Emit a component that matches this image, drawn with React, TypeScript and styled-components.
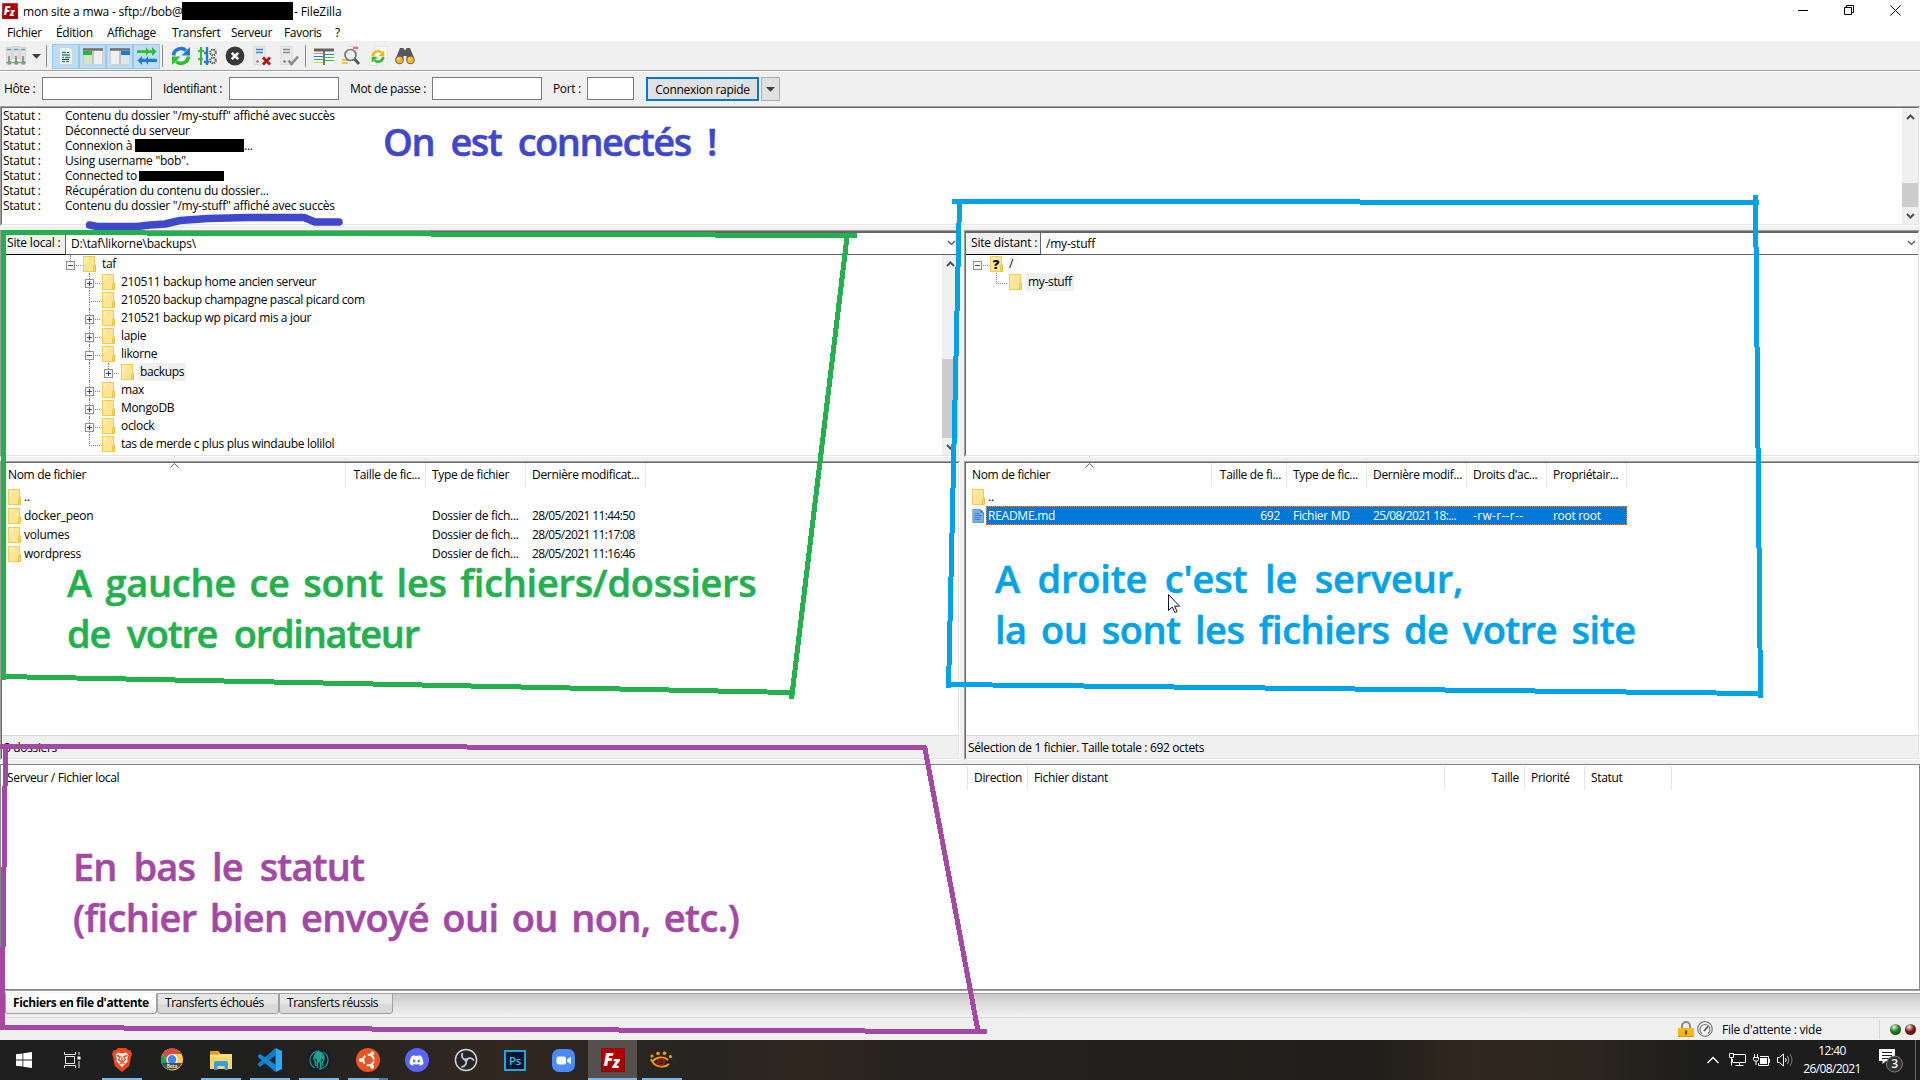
import React from 'react';
import styled, { createGlobalStyle, css } from 'styled-components';
import { FaDiscord } from 'react-icons/fa';

const Global = createGlobalStyle`
  * { box-sizing: border-box; }
  html, body { margin: 0; padding: 0; overflow: hidden; }
  body { font: 12px/15px "Open Sans", "Noto Sans", sans-serif; letter-spacing: -0.25px; color: #000; }
`;

const Desktop = styled.div`
  position: relative;
  width: 1920px;
  height: 1080px;
  display: flex;
  flex-direction: column;
  background: #f0f0f0;
  overflow: hidden;
  white-space: nowrap;
`;

/* ---------- title bar and menu ---------- */
const TitleBar = styled.header`
  height: 24px;
  padding: 0 7px 2px 2px;
  display: flex;
  align-items: center;
  background: #fff;
`;
const Title = styled.span`
  margin-left: 5px;
  width: 159px;
  letter-spacing: -0.18px;
`;
const Redacted = styled.span<{ $w: number; $h: number }>`
  display: inline-block;
  flex: none;
  width: ${p => p.$w}px;
  height: ${p => p.$h}px;
  background: #000;
`;
const TitleEnd = styled.span`
  margin-left: 1px;
  flex: 1;
  letter-spacing: -0.1px;
`;
const WindowButtons = styled.div`
  display: flex;
  gap: 35px;
  padding-right: 12px;
  margin-top: -2px;
`;
const MenuBar = styled.nav`
  height: 17px;
  padding-left: 7px;
  display: flex;
  align-items: center;
  background: #fff;
  letter-spacing: -0.32px;
`;
const MenuItem = styled.span<{ $w: number }>`
  width: ${p => p.$w}px;
`;

/* ---------- toolbar ---------- */
const Toolbar = styled.div`
  height: 31px;
  display: flex;
  align-items: center;
  padding-left: 2px;
  border-bottom: 1px solid #fff;
  box-shadow: inset 0 -1px 0 #a0a0a0;
`;
const ToolButton = styled.span<{ $on?: boolean; $w?: number }>`
  width: ${p => p.$w ?? 27}px;
  height: 25px;
  display: flex;
  align-items: center;
  justify-content: center;
  ${p => p.$on && css`
    background: #c0dcf3;
    border: 1px solid #90c8f6;
  `}
`;
const ToolSeparator = styled.span<{ $l: number; $r: number }>`
  width: 1px;
  height: 22px;
  background: #8d8d8d;
  margin: 0 ${p => p.$r}px 0 ${p => p.$l}px;
`;

/* ---------- quick connect ---------- */
const QuickBar = styled.div`
  height: 34px;
  padding: 5px 0 0 4px;
  display: flex;
  align-items: flex-start;
`;
const QuickLabel = styled.span<{ $w: number }>`
  width: ${p => p.$w}px;
  line-height: 23px;
  letter-spacing: -0.36px;
`;
const QuickInput = styled.span<{ $w: number; $gap: number }>`
  width: ${p => p.$w}px;
  height: 23px;
  margin-right: ${p => p.$gap}px;
  background: #fff;
  border: 1px solid #7a7a7a;
`;
const QuickButton = styled.span`
  width: 113px;
  height: 24px;
  border: 2px solid #0078d7;
  background: #e1e1e1;
  display: flex;
  align-items: center;
  justify-content: center;
  letter-spacing: -0.31px;
`;
const DropButton = styled.span`
  width: 19px;
  height: 24px;
  margin-left: 2px;
  border: 1px solid #adadad;
  background: #e1e1e1;
  display: flex;
  align-items: center;
  justify-content: center;
`;

/* ---------- sunken panels ---------- */
const Sunken = styled.section<{ $h: number }>`
  height: ${p => p.$h}px;
  border: 1px solid;
  border-color: #a0a0a0 #fff #fff #a0a0a0;
  display: flex;
`;
const Inner = styled.div<{ $row?: boolean }>`
  flex: 1;
  min-width: 0;
  background: #fff;
  border: 1px solid;
  border-color: #696969 #e3e3e3 #e3e3e3 #696969;
  display: flex;
  flex-direction: ${p => (p.$row ? 'row' : 'column')};
`;
const LogLines = styled.div`
  flex: 1;
`;
const LogLine = styled.div`
  height: 15px;
  padding-left: 1px;
  display: flex;
  align-items: center;
`;
const LogKind = styled.span`
  width: 62px;
`;
const LogText = styled.span<{ $w?: number }>`
  width: ${p => (p.$w ? p.$w + 'px' : 'auto')};
`;

const ScrollTrack = styled.div<{ $w: number }>`
  width: ${p => p.$w}px;
  background: #f0f0f0;
  display: flex;
  flex-direction: column;
  align-items: stretch;
`;
const ScrollArrow = styled.span`
  height: 17px;
  display: flex;
  align-items: center;
  justify-content: center;
`;
const ScrollSpace = styled.span`
  flex: 1;
`;
const ScrollThumb = styled.span<{ $h: number }>`
  height: ${p => p.$h}px;
  background: #cdcdcd;
`;

const Panes = styled.main`
  margin-top: 4px;
  display: grid;
  grid-template-columns: 960px 956px;
  column-gap: 4px;
`;
const Pane = styled.div`
  display: flex;
  flex-direction: column;
  gap: 4px;
`;
const AddressBar = styled.div`
  height: 23px;
  display: flex;
  border-top: 1px solid #646464;
  border-bottom: 1px solid #646464;
`;
const AddressLabel = styled.span<{ $w: number; $pad: number }>`
  width: ${p => p.$w}px;
  height: 22px;
  padding: 0 0 2px ${p => p.$pad}px;
  background: #f0f0f0;
  border-right: 1px solid #646464;
  border-bottom: 1px solid #000;
  display: flex;
  align-items: center;
  letter-spacing: -0.18px;
`;
const AddressPath = styled.span`
  flex: 1;
  padding: 0 2px 1px 5px;
  display: flex;
  align-items: center;
  justify-content: space-between;
  letter-spacing: -0.2px;
`;
const TreeArea = styled.div`
  flex: 1;
  display: flex;
`;
const TreeRows = styled.div`
  flex: 1;
`;
const TreeRow = styled.div<{ $x: number }>`
  height: 18px;
  padding-left: ${p => p.$x}px;
  display: flex;
  align-items: stretch;
`;
const Rail = styled.span<{ $line?: boolean }>`
  width: 15px;
  margin-left: 4px;
  border-left: 1px dotted ${p => (p.$line ? '#808080' : 'transparent')};
`;
const Stem = styled.span`
  width: 9px;
  display: flex;
  flex-direction: column;
`;
const StemLine = styled.span<{ $h: number; $show: boolean }>`
  height: ${p => p.$h}px;
  margin-left: 4px;
  border-left: 1px dotted ${p => (p.$show ? '#808080' : 'transparent')};
`;
const Expander = styled.svg`
  width: 9px;
  height: 9px;
  display: block;
`;
const Branch = styled.span<{ $long?: boolean }>`
  width: ${p => (p.$long ? 11 : 5)}px;
  margin: 10px 2px 0 ${p => (p.$long ? -5 : 1)}px;
  border-top: 1px dotted #808080;
`;
const IconSlot = styled.span`
  width: 13px;
  padding-top: 1px;
  margin-left: auto;
`;
const StemGroup = styled.span`
  width: 30px;
  display: flex;
`;
const TreeLabel = styled.span<{ $on?: boolean }>`
  margin-left: 4px;
  padding: 0 2px;
  line-height: 18px;
  letter-spacing: -0.33px;
  background: ${p => (p.$on ? '#f0f0f0' : 'transparent')};
`;

/* ---------- file tables ---------- */
const TableRow = styled.div<{ $cols: string; $selected?: boolean }>`
  position: relative;
  height: 19px;
  display: grid;
  grid-template-columns: ${p => p.$cols};
  align-items: center;
  ${p => p.$selected && css`
    width: 661px;
    color: #fff;
    &::before {
      content: '';
      position: absolute;
      inset: 0 0 0 20px;
      background: #0078d7;
      border: 1px dotted #ff8728;
    }
  `}
`;
const HeadRow = styled.div<{ $cols: string; $top?: number }>`
  height: 24px;
  margin-top: ${p => p.$top ?? 0}px;
  display: grid;
  grid-template-columns: ${p => p.$cols};
`;
const HeadCell = styled.span<{ $right?: boolean }>`
  position: relative;
  padding: 0 5px 1px 6px;
  border-right: 1px solid #e5e5e5;
  display: flex;
  align-items: center;
  justify-content: ${p => (p.$right ? 'flex-end' : 'flex-start')};
  letter-spacing: -0.32px;
`;
const SortMark = styled.svg`
  position: absolute;
  top: 0;
  left: calc(50% - 4px);
`;
const Cell = styled.span<{ $right?: boolean; $date?: boolean; $wide?: boolean }>`
  position: relative;
  padding: 0 ${p => (p.$right ? 7 : 6)}px 0 6px;
  text-align: ${p => (p.$right ? 'right' : 'left')};
  letter-spacing: ${p => (p.$date ? -0.6 : p.$wide ? 0.32 : -0.3)}px;
`;
const NameCell = styled.span`
  position: relative;
  padding-left: 6px;
  display: flex;
  align-items: center;
  gap: 3px;
`;
const Filler = styled.div`
  flex: 1;
`;
const PaneStatus = styled.div`
  height: 23px;
  padding: 4px 0 0 2px;
  background: #f0f0f0;
  border-top: 1px solid #d7d7d7;
  letter-spacing: -0.35px;
`;

/* ---------- queue ---------- */
const Queue = styled.section`
  height: 226px;
  margin-top: 4px;
  background: #fff;
  border: 1px solid #828790;
`;
const TabStrip = styled.div`
  height: 28px;
  border-top: 1px solid #a0a0a0;
  border-bottom: 1px solid #d7d7d7;
  padding: 0 0 0 5px;
  display: flex;
  background: linear-gradient(#f8f8f8 0 2px, #a0a0a0 2px 3px, #cacaca 3px, #f3f3f3 100%);
`;
const Tab = styled.span<{ $w: number; $active?: boolean }>`
  width: ${p => p.$w}px;
  height: 21px;
  margin-top: 2px;
  padding-left: 7px;
  line-height: 17px;
  border: 1px solid #a0a0a0;
  border-top-color: ${p => (p.$active ? '#fff' : '#a0a0a0')};
  border-radius: 0 0 3px 3px;
  font-weight: ${p => (p.$active ? 700 : 400)};
  letter-spacing: ${p => (p.$active ? -0.38 : -0.45)}px;
  background: ${p => (p.$active ? 'linear-gradient(#fff 50%, #e8e8e8)' : 'linear-gradient(#e6e6e6 50%, #d9d9d9 50%)')};
`;
const StatusBar = styled.footer`
  height: 22px;
  padding: 0 4px 0 0;
  display: flex;
  align-items: center;
  justify-content: flex-end;
`;
const GaugeGap = styled.span`
  display: flex;
  margin-left: 3px;
`;
const QueueState = styled.span`
  width: 158px;
  margin-left: 9px;
  line-height: 19px;
  border-right: 1px solid #d7d7d7;
  letter-spacing: -0.25px;
`;
const Leds = styled.span`
  display: flex;
  gap: 4px;
  margin-left: 10px;
`;
const Led = styled.i<{ $c: string }>`
  width: 11px;
  height: 11px;
  border-radius: 50%;
  background: radial-gradient(circle at 38% 28%, #e8f0e8 0, ${p => p.$c} 45%, #1a1a1a 130%);
`;

/* ---------- taskbar ---------- */
const Taskbar = styled.div`
  height: 40px;
  display: flex;
  background: linear-gradient(90deg, #1e1e1e 0, #20201f 270px, #2c2520 420px, #33281f 500px, #2a2622 600px, #272521 720px, #31261f 800px, #262320 900px, #231f1c 1100px, #211f1b 1380px, #33281f 1470px, #2a251e 1600px, #1d1d1d 1690px);
`;
const TaskItem = styled.span<{ $w: number; $active?: boolean; $line?: number; $tail?: boolean }>`
  width: ${p => p.$w}px;
  display: flex;
  align-items: center;
  justify-content: center;
  background-color: ${p => (p.$active ? '#55504d' : 'transparent')};
  ${p => p.$line && css`
    background-image: linear-gradient(90deg, #76b9ed ${p.$tail ? '31px, #4f7ea3 31px' : '0'}, ${p.$tail ? '#4f7ea3' : '#76b9ed'});
    background-size: ${p.$line}px 2px;
    background-repeat: no-repeat;
    background-position: center bottom;
  `}
`;
const Tray = styled.div`
  margin-left: auto;
  display: flex;
  align-items: center;
  color: #fff;
`;
const TrayIcon = styled.span<{ $w: number }>`
  width: ${p => p.$w}px;
  display: flex;
  align-items: center;
`;
const Clock = styled.span`
  width: 58px;
  text-align: center;
  line-height: 18px;
  letter-spacing: -0.6px;
`;
const Notice = styled.span`
  margin-left: 18px;
  width: 36px;
  height: 28px;
`;
const PeekEdge = styled.span`
  height: 40px;
  width: 5px;
  border-left: 1px solid #6b6b6b;
`;
const Badge = styled.span<{ $bg: string; $s: number }>`
  width: 24px;
  height: 24px;
  border-radius: 50%;
  background: ${p => p.$bg};
  color: #fff;
  font-size: ${p => p.$s}px;
  display: flex;
  align-items: center;
  justify-content: center;
`;

/* ---------- annotations drawn over the windows ---------- */
const Strokes = styled.svg`
  position: absolute;
  inset: 0;
  pointer-events: none;
`;
const Note = styled.div<{ $x: number; $y: number; $c: string }>`
  position: absolute;
  left: ${p => p.$x}px;
  top: ${p => p.$y}px;
  color: ${p => p.$c};
  font: 600 38px/51px "Open Sans", sans-serif;
  -webkit-text-stroke: 0.5px ${p => p.$c};
`;
const NoteLine = styled.div<{ $ls: number; $ws: number }>`
  letter-spacing: ${p => p.$ls}px;
  word-spacing: ${p => p.$ws}px;
`;
const Pointer = styled.svg`
  position: absolute;
  left: 1168px;
  top: 594px;
`;

/* ---------- drawings ---------- */
const Folder = ({ unknown }: { unknown?: boolean }) => (
  <svg width="13" height="16" viewBox="0 0 13 16" display="block">
    <rect x="0.5" y="0.5" width="11" height="15" fill="#ffe594" stroke="#f0cb55" />
    <path d="M1 1h5l-5 9z" fill="#ffeeb0" />
    <path d="M10.500 15.500v-5l.8-1.500h1.200v6.500z" fill="#ffe08a" stroke="#e8bd3e" />
    {unknown && <text x="6" y="13" textAnchor="middle" fontFamily="Open Sans" fontWeight="800" fontSize="13" fill="#000">?</text>}
  </svg>
);
const PageIcon = () => (
  <svg width="13" height="14" viewBox="0 0 13 14" display="block">
    <path d="M.5.500h8l3 3v10h-11z" fill="#74b1e6" stroke="#5b9bd5" />
    <path d="M.5 0v14" stroke="#b0b8c0" />
    <path d="M2.500 4.500h5M2.500 6.500h7M2.500 8.500h6M2.500 10.500h6" stroke="#3f83c5" />
    <path d="M8.500.500v3h3z" fill="#2f78bd" />
  </svg>
);
const FzLogo = ({ s }: { s: number }) => (
  <svg width={s} height={s} viewBox="0 0 24 24" overflow="visible">
    <rect x="0.5" y="0.5" width="23" height="23" fill="#b40000" stroke="#8c0000" strokeDasharray="1.500 1.200" />
    <path d="M0 14l24-5v15H0z" fill="#960000" opacity=".6" />
    <text x="2.500" y="17.500" fontFamily="Open Sans" fontWeight="800" fontStyle="italic" fontSize="17" fill="#fff">F</text>
    <text x="11.500" y="20" fontFamily="Open Sans" fontWeight="800" fontStyle="italic" fontSize="15" fill="#fff">z</text>
  </svg>
);
const Chevron = ({ up, bold }: { up?: boolean; bold?: boolean }) => (
  <svg width="9" height="6" viewBox="0 0 9 6" fill="none" stroke="#505050" strokeWidth={bold ? 2 : 1.2}>
    <path d={up ? 'M1 5l3.500-3.500L8 5' : 'M1 1l3.500 3.500L8 1'} />
  </svg>
);
const Caret = () => <svg width="9" height="5"><path d="M0 0h9L4.500 4.800z" fill="#404040" /></svg>;

const ServersIcon = () => (
  <svg width="20" height="20" viewBox="0 0 20 20">
    {[0, 7, 14].map((x, i) => (
      <g key={x}>
        <rect x={x} y={i === 1 ? 0.5 : 1.5} width="6" height="12" fill="#e2e2e2" stroke="#c4c4c4" strokeWidth=".7" />
        <path d={`M${x + 1} 3.500h4`} stroke="#4f97d8" strokeWidth="1.400" />
        <path d={`M${x + 3} 10v6`} stroke="#777" strokeWidth="1.400" />
        <rect x={x + 1.5} y="15" width="3.500" height="3.500" fill="#7d8a7d" />
      </g>
    ))}
    <path d="M0 16.500h20" stroke="#7fa67f" strokeWidth="1.400" />
  </svg>
);
const LogIcon = () => (
  <svg width="16" height="18" viewBox="0 0 16 18">
    <path d="M1.500.500h10l3 3v14h-13z" fill="#f3f3f3" stroke="#cfd4d8" />
    <path d="M4 5.500h4M7 10.500h5M4 14.500h3" stroke="#2a7fd0" strokeWidth="1.300" />
    <path d="M4 8h8M4 10.500h2M8 14.500h3" stroke="#3a9b3a" strokeWidth="1.300" />
    <path d="M9 5.500h2M4 12.500h7" stroke="#444" strokeWidth="1.100" />
  </svg>
);
const PaneIcon = ({ right }: { right?: boolean }) => (
  <svg width="20" height="17" viewBox="0 0 20 17">
    <rect x=".5" y=".5" width="19" height="16" fill="#efefef" stroke="#d0d0d0" />
    <path d="M0 1.500h20" stroke="#6e6e6e" strokeWidth="2.500" />
    {right ? <rect x="11" y="3" width="9" height="4" fill="#1f7bd6" /> : <rect x="0" y="3" width="9" height="4" fill="#21c02b" />}
    {right ? <rect x="11" y="7" width="8" height="9" fill="#dfe8f2" /> : <rect x="1" y="7" width="8" height="9" fill="#cfe6cb" />}
    <path d="M10 3v13" stroke="#9a9a9a" />
  </svg>
);
const QueueIcon = () => (
  <svg width="20" height="18" viewBox="0 0 20 18">
    <path d="M0 3.200h9V0l3.500 4.500L9 9V6H0zM11 3.200h4V0l4.500 4.500L15 9V6h-4z" fill="#2ac02f" />
    <path d="M20 11.800h-9V9l-3.500 4.500L11 18v-3h9zM8 11.800H5V9L.5 13.500 5 18v-3h3z" fill="#1f7bd6" />
  </svg>
);
const RefreshIcon = ({ s }: { s: number }) => (
  <svg width={s} height={s} viewBox="0 0 20 20" fill="none">
    <path d="M2.500 9.500A7.500 7.500 0 0 1 15 4.500" stroke={s > 16 ? '#1f7bd6' : '#f5b400'} strokeWidth="3.600" />
    <path d="M19 1v8.500h-8.500z" fill={s > 16 ? '#1f7bd6' : '#f5b400'} />
    <path d="M17.500 10.500A7.500 7.500 0 0 1 5 15.500" stroke="#2ac02f" strokeWidth="3.600" />
    <path d="M1 19v-8.500h8.500z" fill="#2ac02f" />
  </svg>
);
const ProcessIcon = () => (
  <svg width="20" height="20" viewBox="0 0 20 20" fill="none">
    <path d="M3 1v18M0 5h6M0 13h5" stroke="#2ac02f" strokeWidth="2" />
    <path d="M9 1v18M6 7h4M6 16h5" stroke="#1f7bd6" strokeWidth="2.400" />
    <circle cx="15" cy="6.500" r="2.800" stroke="#555" strokeWidth="2" strokeDasharray="1.400 .8" />
    <circle cx="15" cy="14.500" r="2.800" stroke="#555" strokeWidth="2" strokeDasharray="1.400 .8" />
  </svg>
);
const CancelIcon = () => (
  <svg width="20" height="20" viewBox="0 0 20 20">
    <circle cx="10" cy="10" r="9.400" fill="#383838" />
    <path d="M6.800 6.800l6.400 6.400M13.200 6.800l-6.400 6.400" stroke="#fff" strokeWidth="2.600" />
  </svg>
);
const ServerMark = ({ ok }: { ok?: boolean }) => (
  <svg width="20" height="20" viewBox="0 0 20 20" fill="none">
    <rect x="2" y="0.500" width="11" height="18" fill="#e9e9e9" stroke="#dadada" />
    <path d="M4 3.500h7M4 6.500h7" stroke={ok ? '#8a8a8a' : '#3c88d4'} strokeWidth="1.600" />
    <circle cx="5.500" cy="15.500" r="1.300" fill="#7d7d7d" />
    {ok
      ? <path d="M9.500 14.500l3 3.500 6.500-7.500" stroke="#8a8a8a" strokeWidth="2.600" />
      : <path d="M11 11.500l7 7M18 11.500l-7 7" stroke="#b51218" strokeWidth="2.800" />}
  </svg>
);
const CompareIcon = () => (
  <svg width="20" height="17" viewBox="0 0 20 17">
    <rect width="20" height="16" y=".5" fill="#fafafa" />
    <path d="M0 2h20" stroke="#636363" strokeWidth="3" />
    <path d="M0 5.500h9" stroke="#e08080" /><path d="M11 6.500h9M0 8.500h9" stroke="#1f7bd6" />
    <path d="M11 9.500h9" stroke="#2ac02f" /><path d="M0 11.500h9M11 12.500h9" stroke="#2ac02f" />
    <path d="M0 14.500h9" stroke="#f2c230" />
    <path d="M10 3v14" stroke="#4a4a4a" strokeWidth="1.500" />
  </svg>
);
const FindIcon = () => (
  <svg width="20" height="20" viewBox="0 0 20 20" fill="none">
    <path d="M8 .5h8v5" fill="#fafafa" stroke="#d5d5d5" />
    <path d="M12 2h5" stroke="#e04040" strokeWidth="1.500" />
    <path d="M1 14h6M1 17h6" stroke="#f2b705" strokeWidth="1.500" />
    <circle cx="9.500" cy="9" r="5.500" fill="#e9edf0" stroke="#777" strokeWidth="1.700" />
    <path d="M13.500 13l4.500 5" stroke="#555" strokeWidth="2.800" />
  </svg>
);
const SyncIcon = () => (
  <svg width="20" height="20" viewBox="0 0 20 20">
    <path d="M7 .5h12v12H7z" fill="#fbfbfb" stroke="#e2e2e2" />
    <path d="M1.500 12.500h7v7h-7z" fill="#f6f6f6" stroke="#e0e0e0" />
    <g transform="translate(3 3.500)"><RefreshIcon s={14} /></g>
  </svg>
);
const BinocularsIcon = () => (
  <svg width="20" height="18" viewBox="0 0 20 18">
    <path d="M5 1h3.500l1 2h1l1-2H15l4.500 11-8 1V9h-3v4l-8-1z" fill="#585858" />
    <circle cx="4.500" cy="13" r="4.300" fill="#666" /><circle cx="15.500" cy="13" r="4.300" fill="#666" />
    <circle cx="4.500" cy="13" r="3.200" fill="#ffb81c" /><circle cx="15.500" cy="13" r="3.200" fill="#ffb81c" />
    <circle cx="3.700" cy="12" r="1.100" fill="#ffe49a" /><circle cx="14.700" cy="12" r="1.100" fill="#ffe49a" />
  </svg>
);
const LockIcon = () => (
  <svg width="16" height="16" viewBox="0 0 16 16">
    <path d="M4 8V5a4 4 0 0 1 8 0v3" fill="none" stroke="#8b8b8b" strokeWidth="2" />
    <rect y="7" width="16" height="9" fill="#f7b816" /><path d="M0 15.500h16" stroke="#d49a08" />
    <path d="M8 9.500v4" stroke="#5a4a20" strokeWidth="2.200" />
  </svg>
);
const GaugeIcon = () => (
  <svg width="16" height="16" viewBox="0 0 16 16" fill="none">
    <circle cx="8" cy="8" r="7.300" fill="#f4f4f4" stroke="#7a7a7a" strokeWidth="1.200" />
    <path d="M5 12.500A5 5 0 1 1 11 12.500" stroke="#777" strokeWidth="1.200" />
    <path d="M7 10l4-4.500" stroke="#555" strokeWidth="1.800" />
  </svg>
);

const WinIcon = () => <svg width="16" height="16" viewBox="0 0 16 16"><path d="M0 2.300l6.500-.9v6.200H0zM7.300 1.200L16 0v7.600H7.300zM0 8.400h6.500v6.200L0 13.700zM7.300 8.400H16V16l-8.700-1.200z" fill="#fff" /></svg>;
const TaskViewIcon = () => (
  <svg width="17" height="16" viewBox="0 0 17 16" fill="none" stroke="#e8e8e8">
    <path d="M1.500 4.500h9v7h-9zM.5 0v2.500h11V0M.5 16v-2.500h11V16M15 0v3M15 9v7" /><path d="M13.500 4.500h3v3h-3z" fill="#fff" stroke="none" />
  </svg>
);
const BraveIcon = () => (
  <svg width="20" height="24" viewBox="0 0 20 24">
    <path d="M6 0h8l2 2 2.500.200L20 6l-1 3-1.800 9L10 24l-7.200-6L1 9 0 6l1.500-3.800L4 2z" fill="#f4461a" />
    <path d="M3.500 7l2.500-2.500 4 1 4-1L16.500 7l-1.300 4 .3 2.500-2.500 2.500-3 3-3-3-2.500-2.500.3-2.500z" fill="#fff" />
    <path d="M4.500 7.500l3.700 1-1.500 3 2 2 1.300-.7 1.300.7 2-2-1.500-3 3.700-1M10 9v4M7.500 16l2.500-1.500 2.500 1.500" fill="none" stroke="#f4461a" strokeWidth="1.300" />
  </svg>
);
const ChromeIcon = () => (
  <svg width="22" height="24" viewBox="0 0 22 24">
    <circle cx="11" cy="11.500" r="11" fill="#ffce44" />
    <path d="M1.500 6A11 11 0 0 1 20.600 6H11L7 14z" fill="#dc4b3e" />
    <path d="M1.500 6A11 11 0 0 0 8 22.100L12 16 6.500 14z" fill="#18a15d" />
    <circle cx="11" cy="11.500" r="5.600" fill="#fff" /><circle cx="11" cy="11.500" r="4.400" fill="#4285f4" />
    <path d="M1 15h20a11 11 0 0 1-20 0z" fill="#4b4b4b" />
    <text x="11" y="20" textAnchor="middle" fontFamily="Open Sans" fontWeight="700" fontSize="5" fill="#ddd">Beta</text>
  </svg>
);
const ExplorerIcon = () => (
  <svg width="22" height="19" viewBox="0 0 22 19">
    <path d="M0 1h9l1.500 2H22v15H0z" fill="#ffd75e" /><path d="M0 0h9v3.500H0z" fill="#e0a010" /><path d="M0 4h22v2H0z" fill="#ffe18a" />
    <path d="M4 19v-7q0-2 2-2h10q2 0 2 2v7h-3.500v-4h-7v4z" fill="#3a9be8" />
  </svg>
);
const CodeIcon = () => (
  <svg width="24" height="24" viewBox="0 0 24 24">
    <path d="M17.500 0v7.500L2 19 0 17v-1.500z" fill="#0c7dc5" />
    <path d="M17.500 24v-7.500L2 6 0 7.500V9z" fill="#1487d4" />
    <path d="M17.500 0L24 3v18l-6.500 3z" fill="#2aa7f5" />
  </svg>
);
const KrakenIcon = () => (
  <svg width="24" height="24" viewBox="0 0 24 24" fill="none">
    <circle cx="12" cy="12" r="12" fill="#15202b" />
    <circle cx="12" cy="12" r="9" stroke="#1f8f80" strokeWidth="1.300" strokeDasharray="24 4.500" strokeDashoffset="10" />
    <path d="M12 4c-3 0-5 3.500-5 6.500 0 2 1 2 1.500 3V18M12 4c3 0 5 3.500 5 6.500 0 2-1 2-1.500 3V18M10.500 14v6M13.500 14v6" stroke="#22a392" strokeWidth="1.500" />
    <ellipse cx="12" cy="9.500" rx="4" ry="5" fill="#22a392" />
    <circle cx="9" cy="12" r="1" fill="#15202b" /><circle cx="15" cy="12" r="1" fill="#15202b" />
  </svg>
);
const UbuntuMark = () => (
  <svg width="24" height="24" viewBox="0 0 24 24" fill="none">
    <circle cx="12" cy="12" r="12" fill="#e95420" />
    <circle cx="12.500" cy="12" r="5.300" stroke="#fff" strokeWidth="2" strokeDasharray="8.600 2.500" strokeDashoffset="-1.300" />
    <circle cx="4.800" cy="12" r="1.900" fill="#fff" /><circle cx="16.300" cy="5.300" r="1.900" fill="#fff" /><circle cx="16.300" cy="18.700" r="1.900" fill="#fff" />
  </svg>
);
const ObsIcon = () => (
  <svg width="24" height="24" viewBox="0 0 24 24" fill="none">
    <circle cx="12" cy="12" r="10.600" fill="#26252a" stroke="#d4d4d4" strokeWidth="1.500" />
    <g stroke="#c9c9c9" strokeWidth="1.800">
      <path d="M12 12C8 11 7 8 8.500 5" /><path d="M12 12c3-3 6-2 8 .5" /><path d="M12 12c1 4-1 6.500-4.500 7" />
    </g>
    <circle cx="12" cy="12" r="1.800" fill="#c9c9c9" />
  </svg>
);
const PsIcon = () => (
  <svg width="22" height="21" viewBox="0 0 22 21">
    <rect x="1" y="1" width="20" height="19" fill="#06152b" stroke="#25b4e8" strokeWidth="1.800" />
    <text x="11" y="14.800" textAnchor="middle" fontFamily="Open Sans" fontWeight="600" fontSize="11.500" fill="#2fc3f7">Ps</text>
  </svg>
);
const ZoomIcon = () => (
  <svg width="23" height="23" viewBox="0 0 23 23">
    <rect width="23" height="23" rx="7" fill="#4a8cff" /><rect x="4.500" y="7.500" width="9.500" height="8" rx="2" fill="#fff" /><path d="M15 10.500l3.800-2.700v7.400L15 12.500z" fill="#fff" />
  </svg>
);
const EyeIcon = () => (
  <svg width="23" height="18" viewBox="0 0 23 18" fill="none">
    <path d="M1 8c3 9 14 9 18 5M3 10c3-4 11-5 15-1" stroke="#f0a010" strokeWidth="1.800" />
    <circle cx="11" cy="11" r="3.200" stroke="#b81010" strokeWidth="1.600" /><circle cx="11" cy="11" r="1" fill="#b81010" />
    <circle cx="2" cy="5" r="1.600" fill="#f0a010" /><circle cx="8" cy="2.500" r="1.800" fill="#f0a010" /><circle cx="14.500" cy="2.300" r="1.800" fill="#f0a010" /><circle cx="20.500" cy="5.500" r="1.600" fill="#f0a010" />
  </svg>
);

/* ---------- data ---------- */
type Node = { name: string; depth: number; mark?: '+' | '-'; top?: boolean; last?: boolean; on?: boolean; unknown?: boolean };
const localTree: Node[] = [
  { name: 'taf', depth: 0, mark: '-', top: true, last: true },
  { name: '210511 backup home ancien serveur', depth: 1, mark: '+', top: true },
  { name: '210520 backup champagne pascal picard com', depth: 1, top: true },
  { name: '210521 backup wp picard mis a jour', depth: 1, mark: '+', top: true },
  { name: 'lapie', depth: 1, mark: '+', top: true },
  { name: 'likorne', depth: 1, mark: '-', top: true },
  { name: 'backups', depth: 2, mark: '+', top: true, last: true, on: true },
  { name: 'max', depth: 1, mark: '+', top: true },
  { name: 'MongoDB', depth: 1, mark: '+', top: true },
  { name: 'oclock', depth: 1, mark: '+', top: true },
  { name: 'tas de merde c plus plus windaube lolilol', depth: 1, top: true, last: true },
];
const remoteTree: Node[] = [
  { name: '/', depth: 0, mark: '-', last: true, unknown: true },
  { name: 'my-stuff', depth: 1, top: true, last: true, on: true },
];
const Tree = ({ nodes, x }: { nodes: Node[]; x: number }) => (
  <TreeRows>
    {nodes.map(n => (
      <TreeRow key={n.name} $x={x}>
        {n.depth > 0 && <Rail />}
        {n.depth > 1 && <Rail $line />}
        <StemGroup>
          <Stem>
            <StemLine $h={n.mark ? 6 : 11} $show={!!n.top} />
            {n.mark && (
              <Expander viewBox="0 0 9 9">
                <rect x=".5" y=".5" width="8" height="8" fill="#f8f8f8" stroke="#919191" />
                <path d={n.mark === '+' ? 'M2 4.500h5M4.500 2v5' : 'M2 4.500h5'} stroke="#2b4b9b" />
              </Expander>
            )}
            <StemLine $h={n.mark ? 3 : 7} $show={!n.last} />
          </Stem>
          <Branch $long={!n.mark} />
          <IconSlot><Folder unknown={n.unknown} /></IconSlot>
        </StemGroup>
        <TreeLabel $on={n.on}>{n.name}</TreeLabel>
      </TreeRow>
    ))}
  </TreeRows>
);

const log: [string, number?, number?, string?][] = [
  ['Contenu du dossier "/my-stuff" affiché avec succès'],
  ['Déconnecté du serveur'],
  ['Connexion à', 109, 13, '...'],
  ['Using username "bob".'],
  ['Connected to', 85, 10],
  ['Récupération du contenu du dossier...'],
  ['Contenu du dossier "/my-stuff" affiché avec succès'],
];

const LOCAL_COLS = '344px 80px 100px 120px';
const REMOTE_COLS = '246px 75px 80px 100px 80px 80px';
const QUEUE_COLS = '967px 60px 417px 80px 60px 87px';

const Head = ({ cols, labels, right, sort, top }: { cols: string; labels: string[]; right: number; sort?: boolean; top?: number }) => (
  <HeadRow $cols={cols} $top={top}>
    {labels.map((l, i) => (
      <HeadCell key={l} $right={i === right}>
        {l}
        {sort && i === 0 && <SortMark width="9" height="5" fill="none" stroke="#606060"><path d="M.5 4.500l4-4 4 4" /></SortMark>}
      </HeadCell>
    ))}
  </HeadRow>
);

export default function App() {
  return (
    <>
      <Global />
      <Desktop>
        <TitleBar>
          <FzLogo s={16} />
          <Title>mon site a mwa - sftp://bob@</Title>
          <Redacted $w={111} $h={18} />
          <TitleEnd>- FileZilla</TitleEnd>
          <WindowButtons>
            <svg width="11" height="11" stroke="#000"><path d="M0 5.500h10" /></svg>
            <svg width="11" height="11" stroke="#000" fill="none"><path d="M.5 2.500h7v7h-7zM2.500 2V.5h7v7H8" /></svg>
            <svg width="11" height="11" stroke="#000"><path d="M.5.5l10 10M10.500.5l-10 10" /></svg>
          </WindowButtons>
        </TitleBar>
        <MenuBar>
          <MenuItem $w={49}>Fichier</MenuItem>
          <MenuItem $w={51}>Édition</MenuItem>
          <MenuItem $w={65}>Affichage</MenuItem>
          <MenuItem $w={59}>Transfert</MenuItem>
          <MenuItem $w={53}>Serveur</MenuItem>
          <MenuItem $w={51}>Favoris</MenuItem>
          <MenuItem $w={20}>?</MenuItem>
        </MenuBar>
        <Toolbar>
          <ToolButton><ServersIcon /></ToolButton>
          <ToolButton $w={15}><Caret /></ToolButton>
          <ToolSeparator $l={2} $r={5} />
          <ToolButton $on><LogIcon /></ToolButton>
          <ToolButton $on><PaneIcon /></ToolButton>
          <ToolButton $on><PaneIcon right /></ToolButton>
          <ToolButton $on><QueueIcon /></ToolButton>
          <ToolSeparator $l={2} $r={4} />
          <ToolButton><RefreshIcon s={20} /></ToolButton>
          <ToolButton><ProcessIcon /></ToolButton>
          <ToolButton><CancelIcon /></ToolButton>
          <ToolButton><ServerMark /></ToolButton>
          <ToolButton><ServerMark ok /></ToolButton>
          <ToolSeparator $l={3} $r={4} />
          <ToolButton><CompareIcon /></ToolButton>
          <ToolButton><FindIcon /></ToolButton>
          <ToolButton><SyncIcon /></ToolButton>
          <ToolButton><BinocularsIcon /></ToolButton>
        </Toolbar>
        <QuickBar>
          <QuickLabel $w={38}>Hôte :</QuickLabel><QuickInput $w={110} $gap={11} />
          <QuickLabel $w={66}>Identifiant :</QuickLabel><QuickInput $w={110} $gap={11} />
          <QuickLabel $w={82}>Mot de passe :</QuickLabel><QuickInput $w={110} $gap={11} />
          <QuickLabel $w={34}>Port :</QuickLabel><QuickInput $w={47} $gap={12} />
          <QuickButton>Connexion rapide</QuickButton>
          <DropButton><Caret /></DropButton>
        </QuickBar>

        <Sunken $h={120}>
          <Inner $row>
            <LogLines>
              {log.map(([text, w, h, after], i) => (
                <LogLine key={i}>
                  <LogKind>Statut :</LogKind>
                  <LogText $w={w ? (w > 100 ? 70 : 74) : undefined}>{text}</LogText>
                  {w && h && <Redacted $w={w} $h={h} />}
                  {after}
                </LogLine>
              ))}
            </LogLines>
            <ScrollTrack $w={16}>
              <ScrollArrow><Chevron up bold /></ScrollArrow>
              <ScrollSpace />
              <ScrollThumb $h={24} />
              <ScrollArrow><Chevron bold /></ScrollArrow>
            </ScrollTrack>
          </Inner>
        </Sunken>

        <Panes>
          <Pane>
            <Sunken $h={227}>
              <Inner>
                <AddressBar>
                  <AddressLabel $w={64} $pad={5}>Site local :</AddressLabel>
                  <AddressPath>D:\taf\likorne\backups\<Chevron /></AddressPath>
                </AddressBar>
                <TreeArea>
                  <Tree nodes={localTree} x={64} />
                  <ScrollTrack $w={16}>
                    <ScrollArrow><Chevron up bold /></ScrollArrow>
                    <ScrollSpace />
                    <ScrollThumb $h={79} />
                    <ScrollArrow><Chevron bold /></ScrollArrow>
                  </ScrollTrack>
                </TreeArea>
              </Inner>
            </Sunken>
            <Sunken $h={299}>
              <Inner>
                <Head cols={LOCAL_COLS} sort right={1} labels={['Nom de fichier', 'Taille de fic...', 'Type de fichier', 'Dernière modificat...']} />
                <TableRow $cols={LOCAL_COLS}><NameCell><Folder />..</NameCell></TableRow>
                {[['docker_peon', '28/05/2021 11:44:50'], ['volumes', '28/05/2021 11:17:08'], ['wordpress', '28/05/2021 11:16:46']].map(([n, d]) => (
                  <TableRow key={n} $cols={LOCAL_COLS}>
                    <NameCell><Folder />{n}</NameCell>
                    <Cell />
                    <Cell>Dossier de fich...</Cell>
                    <Cell $date>{d}</Cell>
                  </TableRow>
                ))}
                <Filler />
                <PaneStatus>3 dossiers</PaneStatus>
              </Inner>
            </Sunken>
          </Pane>
          <Pane>
            <Sunken $h={227}>
              <Inner>
                <AddressBar>
                  <AddressLabel $w={75} $pad={5}>Site distant :</AddressLabel>
                  <AddressPath>/my-stuff<Chevron /></AddressPath>
                </AddressBar>
                <TreeArea><Tree nodes={remoteTree} x={7} /></TreeArea>
              </Inner>
            </Sunken>
            <Sunken $h={299}>
              <Inner>
                <Head cols={REMOTE_COLS} sort right={1} labels={['Nom de fichier', 'Taille de fi...', 'Type de fic...', 'Dernière modif...', "Droits d'ac...", 'Propriétair...']} />
                <TableRow $cols={REMOTE_COLS}><NameCell><Folder />..</NameCell></TableRow>
                <TableRow $cols={REMOTE_COLS} $selected>
                  <NameCell><PageIcon />README.md</NameCell>
                  <Cell $right>692</Cell>
                  <Cell>Fichier MD</Cell>
                  <Cell $date>25/08/2021 18:...</Cell>
                  <Cell $wide>-rw-r--r--</Cell>
                  <Cell>root root</Cell>
                </TableRow>
                <Filler />
                <PaneStatus>Sélection de 1 fichier. Taille totale : 692 octets</PaneStatus>
              </Inner>
            </Sunken>
          </Pane>
        </Panes>

        <Queue>
          <Head cols={QUEUE_COLS} top={1} right={3} labels={['Serveur / Fichier local', 'Direction', 'Fichier distant', 'Taille', 'Priorité', 'Statut']} />
        </Queue>
        <TabStrip>
          <Tab $w={152} $active>Fichiers en file d'attente</Tab>
          <Tab $w={122}>Transferts échoués</Tab>
          <Tab $w={114}>Transferts réussis</Tab>
        </TabStrip>
        <StatusBar>
          <LockIcon />
          <GaugeGap><GaugeIcon /></GaugeGap>
          <QueueState>File d'attente : vide</QueueState>
          <Leds><Led $c="#1d7a1d" /><Led $c="#7c1414" /></Leds>
        </StatusBar>

        <Taskbar>
          <TaskItem $w={48}><WinIcon /></TaskItem>
          <TaskItem $w={49}><TaskViewIcon /></TaskItem>
          <TaskItem $w={50} $line={40}><BraveIcon /></TaskItem>
          <TaskItem $w={49}><ChromeIcon /></TaskItem>
          <TaskItem $w={49} $line={40}><ExplorerIcon /></TaskItem>
          <TaskItem $w={49} $line={40}><CodeIcon /></TaskItem>
          <TaskItem $w={49} $line={40}><KrakenIcon /></TaskItem>
          <TaskItem $w={49} $line={40} $tail><UbuntuMark /></TaskItem>
          <TaskItem $w={49}><Badge $bg="#5865f2" $s={15}><FaDiscord /></Badge></TaskItem>
          <TaskItem $w={49}><ObsIcon /></TaskItem>
          <TaskItem $w={49}><PsIcon /></TaskItem>
          <TaskItem $w={49}><ZoomIcon /></TaskItem>
          <TaskItem $w={49} $active $line={49}><FzLogo s={24} /></TaskItem>
          <TaskItem $w={49} $line={40}><EyeIcon /></TaskItem>
          <Tray>
            <TrayIcon $w={22}><svg width="12" height="8" fill="none" stroke="#fff" strokeWidth="1.300"><path d="M.5 7L6 1.500 11.500 7" /></svg></TrayIcon>
            <TrayIcon $w={24}>
              <svg width="17" height="14" viewBox="0 0 17 14" fill="none" stroke="#fff"><path d="M5 1.500h11.500v8H3.500V6M10.500 9.500v3M6.500 12.500h8M.5.500h4v4h-4zM2.500 4.500v8" /></svg>
            </TrayIcon>
            <TrayIcon $w={24}>
              <svg width="17" height="13" viewBox="0 0 17 13" fill="none" stroke="#fff"><path d="M7 2.500h8.500v9h-10V9M16.500 5v4M1.500 0v3M4.500 0v3M.5 3.500h5v2l-1 1.500h-3L.5 5.500zM3 7v4" /><path d="M7 4h7v6H7z" fill="#fff" stroke="none" /></svg>
            </TrayIcon>
            <TrayIcon $w={26}>
              <svg width="17" height="14" viewBox="0 0 17 14" fill="none" stroke="#fff"><path d="M.5 4.500h2l4-3.500v12l-4-3.500h-2zM8.500 5q1.200 2 0 4" /><path d="M10.500 3q2.800 4 0 8" stroke="#aaa" /><path d="M13 1q4 6 0 12" stroke="#777" /></svg>
            </TrayIcon>
            <Clock>12:40<br />26/08/2021</Clock>
            <Notice>
              <svg width="26" height="28" viewBox="0 0 26 28">
                <path d="M0 3h16v12H7l-3.500 3v-3H0z" fill="#fff" />
                <path d="M3 6.500h10M3 9.500h10M3 12.500h7" stroke="#1d1d1d" />
                <circle cx="15.500" cy="18" r="8" fill="#333" stroke="#7c7c7c" />
                <text x="15.500" y="22" textAnchor="middle" fontFamily="Open Sans" fontWeight="600" fontSize="12" fill="#fff">3</text>
              </svg>
            </Notice>
            <PeekEdge />
          </Tray>
        </Taskbar>

        <Strokes width="1920" height="1080" fill="none" shapeRendering="crispEdges" strokeWidth="5">
          <path stroke="#3f48cc" strokeWidth="7.500" strokeLinecap="round" strokeLinejoin="round" shapeRendering="auto" d="M89.500 225l7.500 1.500h40l13-1.500 15-1 15-3.500 28-2 40-1h56l11 4.500h24" />
          <path stroke="#22b14c" d="M2 232.500L857 235.500M3.500 230v450M847 237L791.500 699M2 676.500L792 692.500" />
          <path stroke="#00a2e8" d="M952 201.500L1759 202.500M1755.500 195L1760.500 698M959.500 201L948.500 688M947 684.500L1761 693.500" />
          <path stroke="#a349a4" d="M0 746.500L926 747.500M924.500 746L978 1031M5.500 748L2 1028M0 1027.500L987 1031.500" />
        </Strokes>
        <Note $x={383} $y={116} $c="#3f48cc"><NoteLine $ls={-1.5} $ws={8}>On est connectés !</NoteLine></Note>
        <Note $x={67} $y={557} $c="#22b14c">
          <NoteLine $ls={-0.28} $ws={4}>A gauche ce sont les fichiers/dossiers</NoteLine>
          <NoteLine $ls={-1.25} $ws={8}>de votre ordinateur</NoteLine>
        </Note>
        <Note $x={995} $y={553} $c="#00a2e8">
          <NoteLine $ls={-0.2} $ws={8}>A droite c'est le serveur,</NoteLine>
          <NoteLine $ls={-0.5} $ws={5}>la ou sont les fichiers de votre site</NoteLine>
        </Note>
        <Note $x={73} $y={841} $c="#a349a4">
          <NoteLine $ls={-0.9} $ws={8}>En bas le statut</NoteLine>
          <NoteLine $ls={-0.6} $ws={4}>(fichier bien envoyé oui ou non, etc.)</NoteLine>
        </Note>
        <Pointer width="13" height="20" viewBox="0 0 13 20">
          <path d="M.5.500v16l3.800-3.500 2.600 5.500 2.200-1-2.500-5.300h5z" fill="#fff" stroke="#15152a" />
        </Pointer>
      </Desktop>
    </>
  );
}
